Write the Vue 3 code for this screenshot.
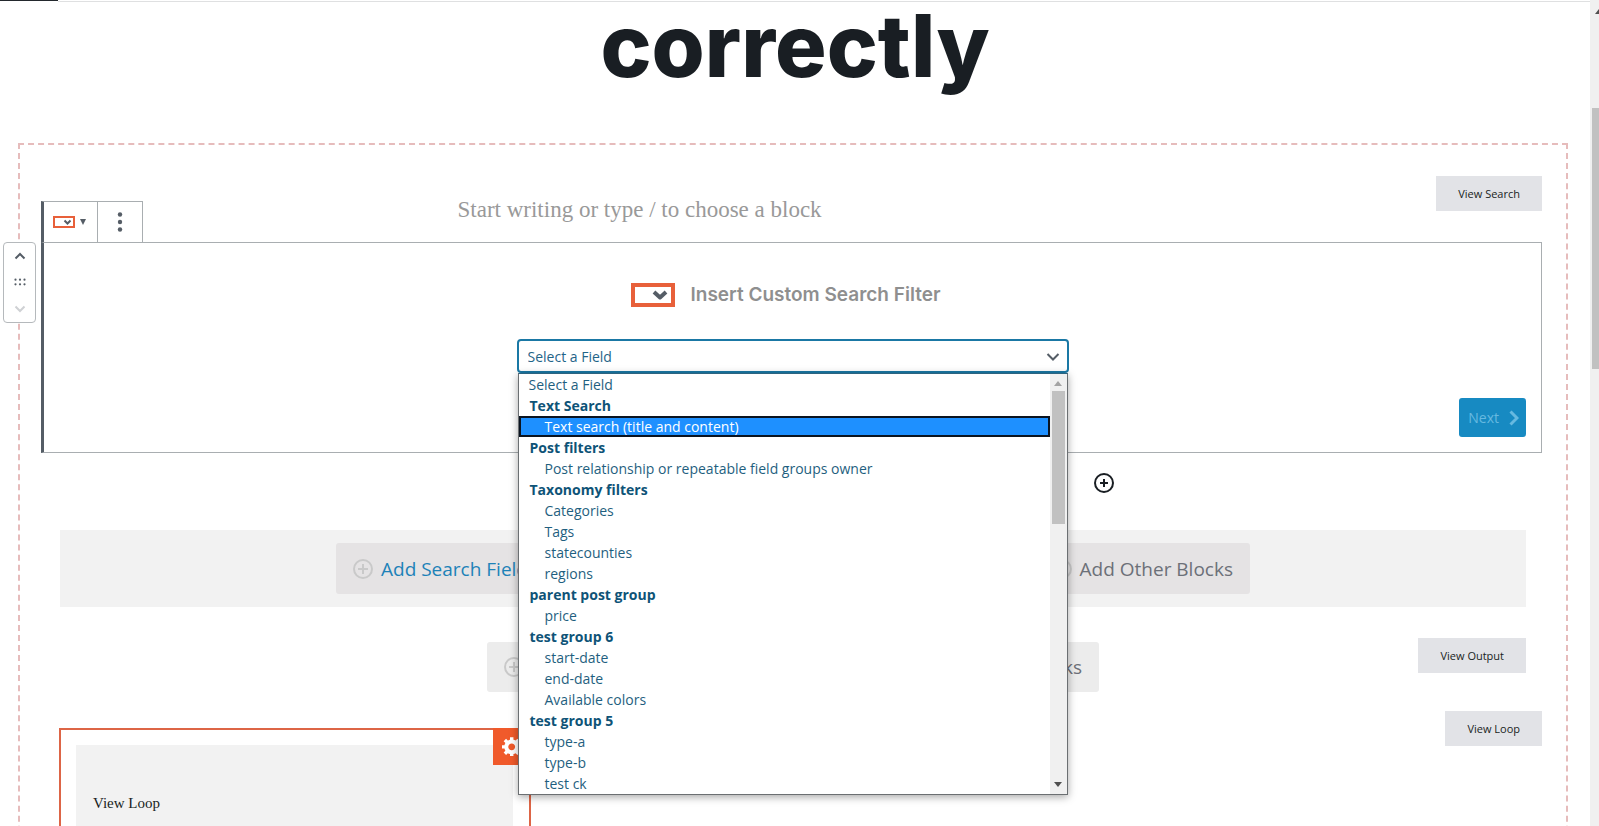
<template>
  <div class="screen">
    <div class="editor">
      <div class="tab-strip"><span class="tab-active"></span></div>
      <h1 class="post-title">correctly</h1>

      <section class="view">
        <div class="search-head">
          <div class="toolbar">
            <button class="tool tool-type" aria-label="Change block type">
              <svg width="22" height="12" viewBox="0 0 22 12" fill="none"><rect x="1" y="1" width="20" height="10" stroke="#e8603a" stroke-width="2" /><path d="M11.500 4.500l3 3 3-3" stroke="#555d66" stroke-width="2" /></svg>
              <svg width="6" height="6" viewBox="0 0 6 6"><path d="M0 0h6L3 6z" fill="#555d66" /></svg>
            </button>
            <button class="tool tool-more" aria-label="More options">
              <svg width="6" height="20" viewBox="0 0 6 20" fill="#555d66"><circle cx="3" cy="2.500" r="2.200" /><circle cx="3" cy="10" r="2.200" /><circle cx="3" cy="17.500" r="2.200" /></svg>
            </button>
          </div>
          <p class="placeholder">Start writing or type / to choose a block</p>
          <button class="view-label">View Search</button>
        </div>

        <div class="block">
          <div class="mover">
            <button aria-label="Move up"><svg width="12" height="8" viewBox="0 0 12 8" fill="none" stroke="#555d66" stroke-width="2"><path d="M1.500 6.500L6 2l4.500 4.500" /></svg></button>
            <button aria-label="Drag block"><svg width="12" height="8" viewBox="0 0 12 8" fill="#555d66"><circle v-for="n in 6" :key="n" :cx="1.5 + ((n - 1) % 3) * 4.5" :cy="n > 3 ? 6.3 : 1.7" r="1.100" /></svg></button>
            <button aria-label="Move down" disabled><svg width="12" height="8" viewBox="0 0 12 8" fill="none" stroke="#cfd1d4" stroke-width="2"><path d="M1.500 1.500L6 6l4.500-4.500" /></svg></button>
          </div>

          <div class="block-title">
            <svg width="44" height="24" viewBox="0 0 44 24" fill="none"><rect x="2" y="2" width="40" height="20" stroke="#e8603a" stroke-width="4" /><path d="M23 9l6 5.500L35 9" stroke="#555d66" stroke-width="4" stroke-linejoin="round" /></svg>
            <h2>Insert Custom Search Filter</h2>
          </div>

          <div class="field">
            <select v-model="field" class="field-select" aria-label="Field">
              <option>Select a Field</option>
            </select>
            <svg class="field-arrow" width="14" height="10" viewBox="0 0 14 10" fill="none" stroke="#555d66" stroke-width="2"><path d="M1.500 2L7 7.500 12.500 2" /></svg>
            <div class="popup">
              <ul class="options" role="listbox" aria-label="Fields">
                <li
                  v-for="option in options"
                  :key="option.text"
                  :class="['option', option.kind, { active: option.text === hovered }]"
                  @mouseenter="hovered = option.text"
                >{{ option.text }}</li>
              </ul>
              <div class="popup-scroll">
                <svg width="8" height="5" viewBox="0 0 8 5"><path d="M0 5h8L4 0z" fill="#a3a3a3" /></svg>
                <span class="popup-thumb"></span>
                <svg width="8" height="5" viewBox="0 0 8 5"><path d="M0 0h8L4 5z" fill="#505050" /></svg>
              </div>
            </div>
          </div>

          <div class="block-actions">
            <button class="btn-next" disabled>
              Next
              <svg width="10" height="16" viewBox="0 0 10 16" fill="none" stroke="currentColor" stroke-width="3"><path d="M1.500 1.500L8 8l-6.500 6.500" /></svg>
            </button>
          </div>
        </div>

        <div class="appender">
          <button aria-label="Add block">
            <svg width="20" height="20" viewBox="0 0 20 20" fill="none" stroke="#191e23" stroke-width="2"><circle cx="10" cy="10" r="9" /><path d="M10 6v8M6 10h8" /></svg>
          </button>
        </div>

        <div class="add-bar">
          <div class="add-group">
            <button class="btn-add primary">
              <svg width="20" height="20" viewBox="0 0 20 20" fill="none" stroke="#c9c9c9" stroke-width="2"><circle cx="10" cy="10" r="9" /><path d="M10 5v10M5 10h10" /></svg>
              Add Search Field
            </button>
            <button class="btn-add">
              <svg width="20" height="20" viewBox="0 0 20 20" fill="none" stroke="#c9c9c9" stroke-width="2"><circle cx="10" cy="10" r="9" /><path d="M10 5v10M5 10h10" /></svg>
              Add Other Blocks
            </button>
          </div>
        </div>

        <div class="output-row">
          <div class="add-group light">
            <button class="btn-add" aria-label="Add output field">
              <svg width="20" height="20" viewBox="0 0 20 20" fill="none" stroke="#c9c9c9" stroke-width="2"><circle cx="10" cy="10" r="9" /><path d="M10 5v10M5 10h10" /></svg>
            </button>
            <button class="btn-add">
              <svg width="20" height="20" viewBox="0 0 20 20" fill="none" stroke="#c9c9c9" stroke-width="2"><circle cx="10" cy="10" r="9" /><path d="M10 5v10M5 10h10" /></svg>
              Add Other Blocks
            </button>
          </div>
          <button class="view-label">View Output</button>
        </div>

        <div class="loop-row">
          <div class="loop">
            <div class="loop-body">View Loop</div>
            <button class="loop-settings" aria-label="Loop settings">
              <svg width="20" height="20" viewBox="1 1 17.500 17.500" fill="#fff"><path fill-rule="evenodd" d="M18 12h-2.180c-.170.700-.440 1.350-.810 1.930l1.540 1.540-2.100 2.100-1.540-1.540c-.580.360-1.230.630-1.910.790V19H8v-2.180c-.680-.160-1.330-.430-1.910-.790l-1.540 1.540-2.120-2.120 1.540-1.540c-.360-.580-.630-1.230-.790-1.910H1V9.030h2.170c.160-.700.440-1.350.800-1.940L2.430 5.550l2.100-2.100 1.540 1.540c.580-.370 1.240-.640 1.930-.810V2h3v2.180c.680.160 1.330.430 1.910.790l1.540-1.540 2.120 2.120-1.540 1.540c.360.590.640 1.240.800 1.940H18V12zm-8.500 1.500c1.660 0 3-1.340 3-3s-1.340-3-3-3-3 1.340-3 3 1.340 3 3 3z" /></svg>
            </button>
          </div>
          <button class="view-label">View Loop</button>
        </div>
      </section>
    </div>

    <div class="page-scroll">
      <svg width="8" height="5" viewBox="0 0 8 5"><path d="M0 5h8L4 0z" fill="#505050" /></svg>
      <span class="page-thumb"></span>
    </div>
  </div>
</template>

<script setup>
import { ref } from 'vue'

const field = ref('Select a Field')
const hovered = ref('Text search (title and content)')

const groups = [
  { name: 'Text Search', fields: ['Text search (title and content)'] },
  { name: 'Post filters', fields: ['Post relationship or repeatable field groups owner'] },
  { name: 'Taxonomy filters', fields: ['Categories', 'Tags', 'statecounties', 'regions'] },
  { name: 'parent post group', fields: ['price'] },
  { name: 'test group 6', fields: ['start-date', 'end-date', 'Available colors'] },
  { name: 'test group 5', fields: ['type-a', 'type-b', 'test ck'] }
]

const options = [{ text: 'Select a Field', kind: 'plain' }]
for (const group of groups) {
  options.push({ text: group.name, kind: 'group' })
  group.fields.forEach(text => options.push({ text, kind: 'child' }))
}
</script>

<style>
body {
  margin: 0;
  background: #fff;
}
</style>

<style scoped>
.screen {
  display: flex;
  height: 100vh;
  overflow: hidden;
  font-family: "Open Sans", "Noto Sans", sans-serif;
}

.screen * {
  box-sizing: border-box;
}

button {
  margin: 0;
  padding: 0;
  border: 0;
  background: none;
  font-family: inherit;
}

svg {
  display: block;
  flex: none;
}

.editor {
  flex: 1;
  min-width: 0;
}

.tab-strip {
  height: 2px;
  border-bottom: 1px solid #dfe0e1;
}

.tab-active {
  display: block;
  width: 58px;
  height: 2px;
  background: linear-gradient(#23282d 50%, #fff 50%);
}

.post-title {
  margin: 0;
  height: 141px;
  font-family: Inter, sans-serif;
  font-size: 86px;
  font-weight: 800;
  line-height: 88px;
  text-align: center;
  color: #191e23;
}

.view {
  margin: 0 22px 0 18px;
  padding: 31px 24px 0 21px;
  border: 2px dashed #e6bcbc;
  border-bottom: 0;
}

.search-head {
  display: grid;
  grid-template-columns: 1fr 668px 1fr;
  height: 66px;
}

.toolbar {
  display: flex;
  align-self: end;
  justify-self: start;
  height: 41px;
  border: 1px solid #a9aeb1;
  border-left: 3px solid #555d66;
  border-bottom: 0;
}

.tool {
  display: flex;
  align-items: center;
  justify-content: center;
}

.tool-type {
  width: 54px;
  gap: 5px;
  padding-right: 2px;
  border-right: 1px solid #a9aeb1;
}

.tool-more {
  width: 44px;
}

.placeholder {
  margin: 20px 0 0;
  font-family: "Liberation Serif", serif;
  font-size: 23px;
  line-height: 28px;
  color: #999;
}

.view-label {
  align-self: start;
  justify-self: end;
  height: 35px;
  padding: 0 22px;
  background: #e2e3e7;
  color: #191e23;
  font-size: 11px;
}

.block {
  position: relative;
  padding: 40px 15px 15px;
  border: 1px solid #a9aeb1;
  border-left: 3px solid #555d66;
}

.mover {
  position: absolute;
  left: -41px;
  top: -1px;
  display: flex;
  flex-direction: column;
  justify-content: space-around;
  width: 33px;
  height: 81px;
  border: 1px solid #b5b9bc;
  border-radius: 4px;
  background: #fff;
}

.mover button {
  display: flex;
  align-items: center;
  justify-content: center;
  height: 26px;
}

.block-title {
  display: flex;
  align-items: center;
  justify-content: center;
  gap: 16px;
  height: 24px;
  margin-bottom: 32px;
  padding-right: 14px;
}

.block-title h2 {
  margin: 0;
  font-family: Inter, sans-serif;
  font-size: 19px;
  font-weight: 600;
  line-height: 22px;
  color: #8f8f8f;
}

.field {
  position: relative;
  max-width: 552px;
  margin: 0 auto;
}

.field-select {
  display: block;
  width: 100%;
  height: 34px;
  padding: 0 9px;
  border: 2px solid #1a78a5;
  border-radius: 4px;
  appearance: none;
  outline: 0;
  background: #fff;
  color: #1f6488;
  font-family: inherit;
  font-size: 14px;
}

.field-arrow {
  position: absolute;
  right: 9px;
  top: 13px;
}

.popup {
  position: absolute;
  z-index: 2;
  left: 1px;
  right: 1px;
  top: 34px;
  display: flex;
  border: 1px solid #6b6f72;
  border-top-color: #2d6480;
  background: #fff;
  box-shadow: 0 2px 8px rgba(0, 0, 0, 0.35);
}

.options {
  flex: 1;
  margin: 0;
  padding: 0;
  list-style: none;
}

.option {
  height: 21px;
  padding-left: 10px;
  color: #1f5f80;
  font-size: 14px;
  line-height: 21px;
}

.option.group {
  padding-left: 11px;
  color: #0e5377;
  font-weight: 700;
}

.option.child {
  padding-left: 26px;
}

.option.active {
  border: 2px solid #0b1420;
  padding-left: 24px;
  background: #1e90ff;
  color: #fff;
  line-height: 17px;
}

.popup-scroll {
  display: flex;
  flex-direction: column;
  align-items: center;
  width: 17px;
  padding: 7px 0;
  background: #f0f0f0;
}

.popup-thumb {
  width: 13px;
  height: 133px;
  margin: 5px 0 auto;
  background: #c1c1c1;
}

.block-actions {
  display: flex;
  justify-content: flex-end;
  margin-top: 25px;
}

.btn-next {
  display: flex;
  align-items: center;
  gap: 10px;
  height: 39px;
  padding: 0 7px 0 9px;
  border-radius: 3px;
  background: #178ac2;
  color: #66b9e0;
  font-size: 14px;
}

.appender {
  display: flex;
  justify-content: flex-end;
  max-width: 668px;
  height: 77px;
  margin: 0 auto;
  padding: 20px 12px 0;
}

.appender button {
  height: 20px;
}

.add-bar {
  margin: 0 16px 0 19px;
  padding: 13px 0;
  background: #f2f2f2;
}

.add-group {
  display: flex;
  justify-content: space-between;
  max-width: 914px;
  margin: 0 auto;
}

.btn-add {
  display: flex;
  align-items: center;
  gap: 8px;
  height: 51px;
  padding: 0 17px;
  border-radius: 3px;
  background: #e5e3e4;
  color: #6c7078;
  font-size: 19px;
}

.btn-add.primary {
  color: #1d82b8;
}

.output-row {
  display: grid;
  grid-template-columns: 1fr 612px 1fr;
  margin: 31px 16px 0 19px;
}

.add-group.light {
  grid-column: 2;
  width: 100%;
  margin-top: 4px;
}

.light .btn-add {
  height: 50px;
  background: #ececec;
}

.loop-row {
  display: flex;
  justify-content: space-between;
  align-items: flex-start;
  margin-top: 19px;
  padding-left: 18px;
}

.loop {
  position: relative;
  width: 472px;
  margin-top: 17px;
  padding: 15px 16px 15px 15px;
  border: 2px solid #dd6546;
}

.loop-body {
  min-height: 140px;
  padding: 47px 17px;
  background: #f2f2f2;
  color: #191e23;
  font-family: "Liberation Serif", serif;
  font-size: 15px;
  line-height: 22px;
}

.loop-settings {
  position: absolute;
  top: -2px;
  right: -2px;
  width: 38px;
  height: 37px;
  padding: 8px 0 9px 9px;
  background: #f05a2b;
}

.page-scroll {
  width: 9px;
  padding: 9px 0 0 5px;
  overflow: hidden;
  background: #f0f0f0;
}

.page-thumb {
  display: block;
  width: 13px;
  height: 261px;
  margin: 94px 0 0 -3px;
  background: #c1c1c1;
}
</style>
